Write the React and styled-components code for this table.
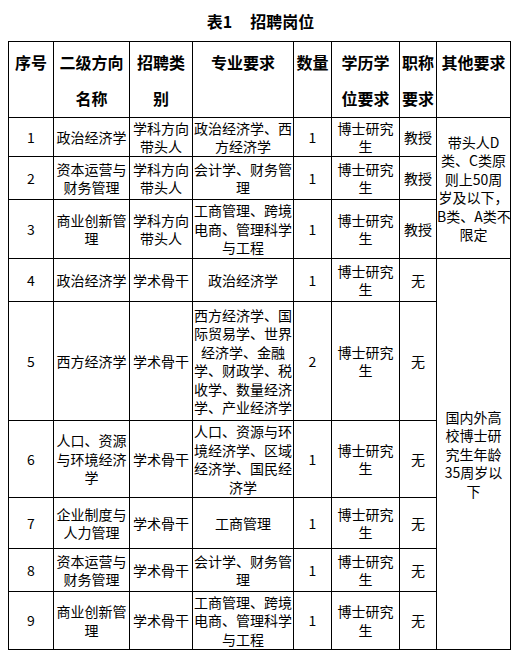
import React from 'react';
import styled, { createGlobalStyle } from 'styled-components';

const GlobalStyle = createGlobalStyle`
  html, body { margin: 0; padding: 0; background: #fff; }
  body {
    font-family: "Noto Sans CJK SC", "DejaVu Sans", sans-serif;
    color: #000;
  }
`;

const Page = styled.div`
  width: 518px;
  height: 653px;
  padding: 0 8px;
  box-sizing: border-box;
  display: flex;
  flex-direction: column;
`;

const Title = styled.h1`
  margin: 0;
  height: 41px;
  display: flex;
  align-items: center;
  justify-content: center;
  gap: 18px;
  font-size: 16px;
  font-weight: 700;
  line-height: 1;
  padding-left: 3px;
`;

const Table = styled.table`
  width: 503px;
  border-collapse: collapse;
  table-layout: fixed;
  font-size: 14px;
  line-height: 18.5px;
`;

const Row = styled.tr`
  height: ${(p) => p.$h}px;
`;

const HeadCell = styled.th`
  border: 1px solid #000;
  padding: 2px 0 0;
  font-size: 16px;
  font-weight: 700;
  line-height: 36px;
  vertical-align: top;
  text-align: center;
  white-space: nowrap;
`;

const Cell = styled.td`
  border: 1px solid #000;
  padding: 0;
  text-align: center;
  vertical-align: middle;
  white-space: nowrap;
  font-weight: 400;
`;

const Lines = ({ items }) =>
  items.map((t, i) => (
    <React.Fragment key={i}>
      {i > 0 && <br />}
      {t}
    </React.Fragment>
  ));

const widths = [45, 76, 63, 101, 38, 68, 37, 74];

const headers = [
  ['序号'],
  ['二级方向', '名称'],
  ['招聘类', '别'],
  ['专业要求'],
  ['数量'],
  ['学历学', '位要求'],
  ['职称', '要求'],
  ['其他要求'],
];

const rows = [
  { h: 39, no: '1', dir: ['政治经济学'], type: ['学科方向', '带头人'], major: ['政治经济学、西', '方经济学'], n: '1', title: '教授' },
  { h: 43, no: '2', dir: ['资本运营与', '财务管理'], type: ['学科方向', '带头人'], major: ['会计学、财务管', '理'], n: '1', title: '教授' },
  { h: 59, no: '3', dir: ['商业创新管', '理'], type: ['学科方向', '带头人'], major: ['工商管理、跨境', '电商、管理科学', '与工程'], n: '1', title: '教授' },
  { h: 43, no: '4', dir: ['政治经济学'], type: ['学术骨干'], major: ['政治经济学'], n: '1', title: '无' },
  { h: 119, no: '5', dir: ['西方经济学'], type: ['学术骨干'], major: ['西方经济学、国', '际贸易学、世界', '经济学、金融', '学、财政学、税', '收学、数量经济', '学、产业经济学'], n: '2', title: '无' },
  { h: 77, no: '6', dir: ['人口、资源', '与环境经济', '学'], type: ['学术骨干'], major: ['人口、资源与环', '境经济学、区域', '经济学、国民经', '济学'], n: '1', title: '无' },
  { h: 51, no: '7', dir: ['企业制度与', '人力管理'], type: ['学术骨干'], major: ['工商管理'], n: '1', title: '无' },
  { h: 43, no: '8', dir: ['资本运营与', '财务管理'], type: ['学术骨干'], major: ['会计学、财务管', '理'], n: '1', title: '无' },
  { h: 58, no: '9', dir: ['商业创新管', '理'], type: ['学术骨干'], major: ['工商管理、跨境', '电商、管理科学', '与工程'], n: '1', title: '无' },
];

const otherA = ['带头人D', '类、C类原', '则上50周', '岁及以下，', 'B类、A类不', '限定'];
const otherB = ['国内外高', '校博士研', '究生年龄', '35周岁以', '下'];

export default function App() {
  return (
    <>
      <GlobalStyle />
      <Page>
        <Title>
          <span>表1</span>
          <span>招聘岗位</span>
        </Title>
        <Table>
          <colgroup>
            {widths.map((w, i) => (
              <col key={i} style={{ width: w }} />
            ))}
          </colgroup>
          <thead>
            <Row $h={76}>
              {headers.map((h, i) => (
                <HeadCell key={i}>
                  <Lines items={h} />
                </HeadCell>
              ))}
            </Row>
          </thead>
          <tbody>
            {rows.map((r, i) => (
              <Row key={r.no} $h={r.h}>
                <Cell>{r.no}</Cell>
                <Cell><Lines items={r.dir} /></Cell>
                <Cell><Lines items={r.type} /></Cell>
                <Cell><Lines items={r.major} /></Cell>
                <Cell>{r.n}</Cell>
                <Cell><Lines items={['博士研究', '生']} /></Cell>
                <Cell>{r.title}</Cell>
                {i === 0 && (
                  <Cell rowSpan={3}><Lines items={otherA} /></Cell>
                )}
                {i === 3 && (
                  <Cell rowSpan={6}><Lines items={otherB} /></Cell>
                )}
              </Row>
            ))}
          </tbody>
        </Table>
      </Page>
    </>
  );
}
